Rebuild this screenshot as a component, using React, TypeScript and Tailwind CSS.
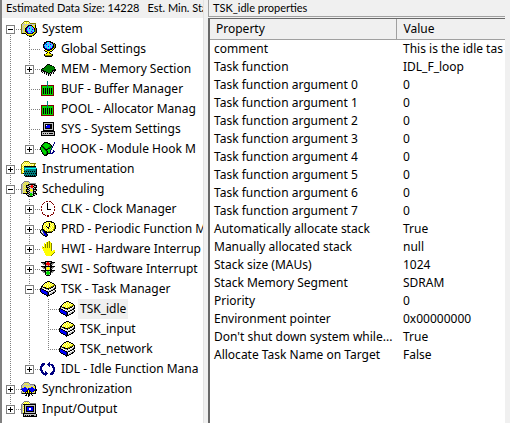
type Palette = Record<string, string>;

const PALETTE: Palette = {
  k: "#000000",
  w: "#ffffff",
  y: "#ffff00",
  l: "#ffff99",
  o: "#808000",
  g: "#00d800",
  d: "#008000",
  r: "#ff0000",
  m: "#800000",
  b: "#0000ff",
  n: "#000080",
  c: "#00ffff",
  t: "#008080",
  p: "#c050ff",
  s: "#808080",
  e: "#c0c0c0",
};

const SPRITES: Record<string, string[]> = {
  system: [
    "...ooooo........",
    "..ollyllo.......",
    ".oeylylyeoooooo.",
    "oeeeeeeeeeeeeeo.",
    "oeeyeyekkkkyeyk.",
    "oeyeyeknccpkyyk.",
    "oeeyekncpcpckyk.",
    "oeyeknpcbcpcpkok",
    "oeeyknccpccbpkok",
    "oeyekbpcpcpccnok",
    "oeeyknbcccbpcnok",
    "oeyeyknpcpcbkyok",
    "okkkkyknnnnkyok.",
    ".....kyyyyyyok..",
    "......koooook...",
    "........kkk.....",
  ],
  globe: [
    "......kkkkk.....",
    "....kknccpkkk...",
    "....kncpcpcpkok.",
    "...kncbcpcbpckok",
    "...kcpccpcccpkok",
    "...kbcpcbcpcbkok",
    "...kncpcccpcnkok",
    "....knbcpcbnkyk.",
    ".....kknnnkkyk..",
    "....kyykkkyyk...",
    ".....kkyyykk....",
    ".......kyk......",
    "......kyyok.....",
    "....kyyyyyyok...",
    "....koooooook...",
    ".....kkkkkkk....",
  ],
  chip: [
    "................",
    "................",
    "................",
    ".......kkk......",
    "......kdddkk....",
    ".....kdddddddk..",
    "....kdddddddddk.",
    "..kkddddddddddd.",
    ".kddddddddddddkk",
    ".kkkddddddddkkkk",
    ".kekkkddddddkek.",
    "..k.kekkddkkek..",
    "....k.kekkek.k..",
    "......k.kek.....",
    "........k.k.....",
    "................",
  ],
  buffer: [
    ".......t........",
    ".......t........",
    ".......t........",
    ".......t........",
    ".mmmmmmtmmmmmm..",
    ".mgggggtgggggm..",
    ".mgggggtgggggm..",
    ".mgkgkgkgkgkgm..",
    ".mgkgkgkgkgkgm..",
    ".mgkgkgkgkgkgm..",
    ".mgkgkgkgkgkgm..",
    ".mgkgkgkgkgkgm..",
    ".mgkgkgkgkgkgm..",
    ".mgggggggggggm..",
    ".mmmmmmmmmmmmm..",
    "................",
  ],
  computer: [
    "................",
    "...kkkkkkkkkkk..",
    "...keeeeeeeeek..",
    "...kekkkkkkkek..",
    "...kekwbbbkkek..",
    "...kekbbbbkkek..",
    "...kekbbbbkkek..",
    "...kekkkkkkkek..",
    "...keeeeeeeeek..",
    "...kkkkkkkkkkk..",
    ".kkkkkkkkkkkkkk.",
    ".keeeeeeeeeeeek.",
    ".kekekekekkkkek.",
    ".keeeeeeeeeeeek.",
    ".kkkkkkkkkkkkkk.",
    "................",
  ],
  hook: [
    "................",
    "....kkkk......n.",
    "...kdggdkk....n.",
    "..kdgggggdk..n..",
    ".kdgggggggdk.n..",
    ".kkdgggggddkn...",
    "kgdkdgggddkgn...",
    "kggdkdgdkkgn....",
    "kgggdkkkgggn....",
    ".kgggdkgggn..n..",
    ".kggggdkggn..nn.",
    "..kgggdkggn.nn..",
    "..kdggdkkknnn...",
    "...kddkk........",
    "....kkk.........",
    "................",
  ],
  calculator: [
    "...ooooo........",
    "..olylylo.......",
    ".olylylyloooooo.",
    "ollllllllllllol.",
    "olylylylylylyo..",
    "oylkkkkkkkkkkkk.",
    "olytttttttttttt.",
    "oyltccccccccccct",
    "olytcttttttttttk",
    "oylttttttttttttk",
    "olyktktktktktktk",
    "oylttttttttttttk",
    "ooktktktktktktkk",
    "...ttttttttttttk",
    "...ktktktktktktk",
    "....kkkkkkkkkkk.",
  ],
  folderLight: [
    "...sssss........",
    "..seyeyes.......",
    ".seyeyeyessssss.",
    "seyeyeykkkkkkks.",
    "seeyekkkeerrekkk",
    "seyeykeekrrrkeek",
    "seeyekkkeerrekkk",
    "seyeyykekeeekek.",
    "seeyekkkeyyekkkk",
    "seyeykeekyyykeek",
    "seeyekkkeeyekkk.",
    "seyeyykekeeekek.",
    "sekkkkkkeggekkkk",
    ".....keekgggkeek",
    "......kkeggekk..",
    ".......kkkkk....",
  ],
  clock: [
    "......mm.mm.....",
    "....m......m....",
    "...m...k....m...",
    "..m....k.....m..",
    ".......k........",
    ".m.....k......m.",
    ".m.....k......m.",
    ".......k........",
    ".m.....kkkk...m.",
    ".m............m.",
    "................",
    "..m..........m..",
    "..m..........m..",
    "...mm......mm...",
    ".....m.mm.m.....",
    ".......mm.......",
  ],
  periodic: [
    "......kkkkkk....",
    "....kkylylykkk..",
    "...kylylyklylyk.",
    "...klylylkylylk.",
    "..kylylylklylyok",
    "..klylklykylylok",
    "..kylylkklylyyok",
    "..klylylkylylyok",
    ".kkkylylylylyok.",
    "kstkkylylylylok.",
    "kwsbkkkyooook...",
    "kswbnkkkkkkk....",
    ".kssbnk.........",
    "..ksbbnk........",
    "...kkbnk........",
    ".....kk.........",
  ],
  hand: [
    "........yo......",
    "......yoyoy.....",
    "....y.yoyoyo....",
    "....yoyoyoyo....",
    "....yoyoyoyo....",
    "..y.yoyoyoyo....",
    "..yoyoyoyoyo....",
    "..yyyyyyyyyo....",
    "...yyyyyyyyo....",
    "...yyyyyyyyo.yy.",
    "....yyyyyyyyyyy.",
    "....yyyyyyyyyyo.",
    ".....yyyyyyyyo..",
    ".....yyyyyyyo...",
    "......yyyyyo....",
    "................",
  ],
  light: [
    ".....kkkkkkk....",
    ".kkkkkerreskkkk.",
    "..sskkrrrrkkss..",
    "...sskrrrrkss...",
    ".....keerekk....",
    ".kkkkkkkkkkkkkk.",
    "..sskkeyyekkss..",
    "...sskyyyykss...",
    ".....keyyekk....",
    ".kkkkkkkkkkkkkk.",
    "..sskkeggekkss..",
    "...sskggggkss...",
    ".....kggggk....",
    ".....keggek.....",
    "......kkkk......",
    "................",
  ],
  books: [
    ".......kkk......",
    ".....kklylkk....",
    "....klylylylkk..",
    "...klylylylylyk.",
    "..klylylylylyook",
    ".kklylylylyookwk",
    ".kekkkylyookkwek",
    "kkewekkkkokwwekk",
    "kbkkwweekwweekk.",
    "kbbbkkwwweekkwek",
    "kbbbbbkkekkwweek",
    ".kbbbbbnkwweekk.",
    "..kkbbbnkweekk..",
    "....kkbnkekk....",
    "......kkkk......",
    ".......k........",
  ],
  cycle: [
    "................",
    ".........n......",
    "..nnn...nn......",
    ".nnnn..nnnnnn...",
    ".nnn....nn.nnn..",
    "nnn......n..nn..",
    "nn..........nnn.",
    "nn...........nn.",
    "nn...........nn.",
    "nnn..........nn.",
    ".nn..n......nnn.",
    ".nnn.nn....nnn..",
    "..nnnnnn..nnnn..",
    "...nnnn...nnn...",
    ".....n..........",
    "................",
  ],
  sync: [
    "................",
    "...sssss........",
    "..seyeyes.......",
    ".seyeyeyesssss..",
    "seeeeeeeeeeeeks.",
    "seyeyeyeyeyeyek.",
    "seybbyeyeybbyyk.",
    "sbbbbbenbbbbbek.",
    "nbbbbbbkbbbbbbnk",
    ".nbbbbkykbbbbnkk",
    "senbbkkykkbbnyk.",
    "seyekykykykeyek.",
    "skkkkkkkkkkkkkk.",
    ".....k.kk.k.....",
    "....kk.kk..k....",
    ".......k........",
  ],
  io: [
    "...sssss........",
    "..slylyls.......",
    ".slylylylssssss.",
    "sekkkkkkkkkkkkk.",
    "selkeeeeeeeeeek.",
    "seykekkkkkkkkek.",
    "selkekbbbbbbkek.",
    "seykekbbwwbbkek.",
    "selkekbbwwbbkek.",
    "seykekbbbbbbkek.",
    "selkekkkkkkkkek.",
    "seykeeeeeeeeeek.",
    "sskkkkkkkkkkkkk.",
    "..keeeeeeeeeeeek",
    "..kekekekekkkeek",
    "..kkkkkkkkkkkkkk",
  ],
};

function Sprite({ name }: { name: string }) {
  return (
    <svg width="16" height="16" viewBox="0 0 16 16" shapeRendering="crispEdges" className="shrink-0" aria-hidden="true">
      {SPRITES[name].flatMap((row, y) =>
        [...row].map((ch, x) =>
          PALETTE[ch] ? <rect key={`${x}-${y}`} x={x} y={y} width="1" height="1" fill={PALETTE[ch]} /> : null,
        ),
      )}
    </svg>
  );
}

/** Guide shapes: line passes by, tee joins a row, end closes a branch, start opens one. */
type Guide = "line" | "tee" | "end" | "start";

function GuideCell({ kind, expanded }: { kind: Guide; expanded?: boolean }) {
  const top = kind === "start" ? 10 : 0;
  const bottom = kind === "end" ? 10 : 20;
  return (
    <span className="relative flex h-5 w-[19px] shrink-0 items-center pl-1">
      <svg width="19" height="20" className="absolute inset-0" shapeRendering="crispEdges" aria-hidden="true">
        <path d={`M8.5 ${top}V${bottom}`} stroke="#808080" strokeDasharray="1 1" />
        {kind !== "line" && <path d="M8 10.5H19" stroke="#808080" strokeDasharray="1 1" />}
      </svg>
      {expanded !== undefined && (
        <button
          type="button"
          aria-label={expanded ? "Collapse" : "Expand"}
          className="relative mt-px flex size-[9px] items-center justify-center border border-[#808080] bg-white"
        >
          <svg width="5" height="5" shapeRendering="crispEdges" className="shrink-0" aria-hidden="true">
            <path d={expanded ? "M0 2.5H5" : "M0 2.5H5M2.5 0V5"} stroke="#000" />
          </svg>
        </button>
      )}
    </span>
  );
}

interface Node {
  label: string;
  icon: string;
  guides: Guide[];
  expanded?: boolean;
  selected?: boolean;
}

const NODES: Node[] = [
  { label: "System", icon: "system", guides: ["start"], expanded: true },
  { label: "Global Settings", icon: "globe", guides: ["line", "tee"] },
  { label: "MEM - Memory Section", icon: "chip", guides: ["line", "tee"], expanded: false },
  { label: "BUF - Buffer Manager", icon: "buffer", guides: ["line", "tee"] },
  { label: "POOL - Allocator Manag", icon: "buffer", guides: ["line", "tee"] },
  { label: "SYS - System Settings", icon: "computer", guides: ["line", "tee"] },
  { label: "HOOK - Module Hook M", icon: "hook", guides: ["line", "end"], expanded: false },
  { label: "Instrumentation", icon: "calculator", guides: ["tee"], expanded: false },
  { label: "Scheduling", icon: "folderLight", guides: ["tee"], expanded: true },
  { label: "CLK - Clock Manager", icon: "clock", guides: ["line", "tee"], expanded: false },
  { label: "PRD - Periodic Function M", icon: "periodic", guides: ["line", "tee"], expanded: false },
  { label: "HWI - Hardware Interrup", icon: "hand", guides: ["line", "tee"], expanded: false },
  { label: "SWI - Software Interrupt", icon: "light", guides: ["line", "tee"], expanded: false },
  { label: "TSK - Task Manager", icon: "books", guides: ["line", "tee"], expanded: true },
  { label: "TSK_idle", icon: "books", guides: ["line", "line", "tee"], selected: true },
  { label: "TSK_input", icon: "books", guides: ["line", "line", "tee"] },
  { label: "TSK_network", icon: "books", guides: ["line", "line", "end"] },
  { label: "IDL - Idle Function Mana", icon: "cycle", guides: ["line", "end"], expanded: false },
  { label: "Synchronization", icon: "sync", guides: ["tee"], expanded: false },
  { label: "Input/Output", icon: "io", guides: ["end"], expanded: false },
];

const PROPERTIES: [string, string][] = [
  ["comment", "This is the idle tas"],
  ["Task function", "IDL_F_loop"],
  ...Array.from({ length: 8 }, (_, i): [string, string] => [`Task function argument ${i}`, "0"]),
  ["Automatically allocate stack", "True"],
  ["Manually allocated stack", "null"],
  ["Stack size (MAUs)", "1024"],
  ["Stack Memory Segment", "SDRAM"],
  ["Priority", "0"],
  ["Environment pointer", "0x00000000"],
  ["Don't shut down system while...", "True"],
  ["Allocate Task Name on Target", "False"],
];

export default function App() {
  return (
    <div className="flex h-screen overflow-hidden bg-[#f0f0f0] font-['Noto_Sans',sans-serif] text-xs text-black">
      <section className="flex w-[204px] shrink-0 flex-col border-r border-l-2 border-r-[#e3e3e3] border-l-[#808080]">
        <header className="flex h-[18px] shrink-0 gap-2 overflow-hidden pl-1 font-[Lato,sans-serif] text-[11px] leading-4 whitespace-nowrap">
          <span>Estimated Data Size: 14228</span>
          <span>Est. Min. Sta</span>
        </header>
        <ul role="tree" aria-label="Configuration" className="flex-1 overflow-hidden bg-white pt-px">
          {NODES.map((node) => (
            <li
              key={node.label}
              role="treeitem"
              aria-level={node.guides.length}
              aria-expanded={node.expanded}
              aria-selected={!!node.selected}
              className="flex h-5 items-center"
            >
              {node.guides.map((kind, i) => (
                <GuideCell key={i} kind={kind} expanded={i === node.guides.length - 1 ? node.expanded : undefined} />
              ))}
              <Sprite name={node.icon} />
              <span className={`ml-[3px] px-0.5 leading-5 whitespace-nowrap ${node.selected ? "bg-[#f0f0f0]" : ""}`}>
                {node.label}
              </span>
            </li>
          ))}
        </ul>
      </section>

      <section className="ml-1 flex min-w-0 flex-1 flex-col pr-[5px]">
        <h2 className="h-[17px] shrink-0 border-b border-l border-[#a0a0a0] pl-1 font-[Lato,sans-serif] text-[11px] leading-4">
          TSK_idle properties
        </h2>
        <div className="mt-px flex-1 overflow-hidden border-t border-l-2 border-[#696969] bg-white">
          <table className="w-full table-fixed border-collapse text-left">
            <colgroup>
              <col className="w-[186px]" />
              <col />
            </colgroup>
            <thead className="bg-[#f0f0f0]">
              <tr className="h-5 border-b border-[#a0a0a0]">
                <th className="border-r border-[#a0a0a0] p-0 pl-1.5 leading-[19px] font-normal">Property</th>
                <th className="p-0 pl-[7px] leading-[19px] font-normal">Value</th>
              </tr>
            </thead>
            <tbody>
              {PROPERTIES.map(([name, value]) => (
                <tr key={name} className="h-[18px]">
                  <td className="overflow-hidden p-0 pl-1 leading-[18px] whitespace-nowrap">{name}</td>
                  <td className="overflow-hidden p-0 pl-[7px] leading-[18px] whitespace-nowrap">{value}</td>
                </tr>
              ))}
            </tbody>
          </table>
        </div>
      </section>
    </div>
  );
}
